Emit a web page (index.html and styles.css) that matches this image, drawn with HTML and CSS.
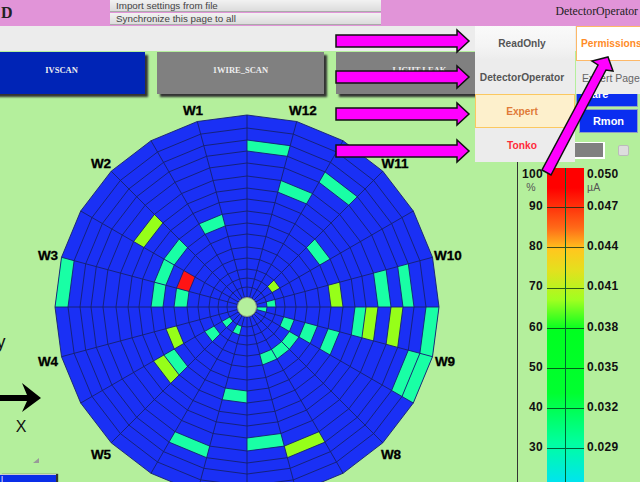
FILE: index.html
```html
<!DOCTYPE html>
<html lang="en">
<head>
    <meta charset="UTF-8">
    <meta name="viewport" content="width=device-width, initial-scale=1.0">
    <title>DetectorOperator</title>
    <link rel="stylesheet" href="styles.css">
</head>
<body>

    <!-- Top bar -->
    <div class="header">
        <div class="brand">D</div>
        <div class="file-menu">
            <button class="file-btn">Import settings from file</button>
            <button class="file-btn">Synchronize this page to all</button>
        </div>
        <div class="user">DetectorOperator</div>
    </div>
    <div class="toolbar"></div>

    <div class="main">
        <!-- Scan buttons and sector wheel -->
        <div class="left-col">
            <div class="scans">
                <button class="scan-btn scan-active">IVSCAN</button>
                <button class="scan-btn">1WIRE_SCAN</button>
                <button class="scan-btn">LIGHT LEAK</button>
            </div>
            <svg id="wheel" class="wheel" viewBox="0 95 517 387">
                <g id="cells"></g>
                <g id="grid" class="grid"></g>
                <circle class="hub" cx="247" cy="307" r="9.5"></circle>
                <text class="sector" x="193" y="115">W1</text>
                <text class="sector" x="303" y="115">W12</text>
                <text class="sector" x="395" y="168">W11</text>
                <text class="sector" x="448" y="260">W10</text>
                <text class="sector" x="445" y="366">W9</text>
                <text class="sector" x="391" y="459">W8</text>
                <text class="sector" x="101" y="459">W5</text>
                <text class="sector" x="48" y="366">W4</text>
                <text class="sector" x="48" y="260">W3</text>
                <text class="sector" x="101" y="168">W2</text>
                <text class="axis axis-y" x="1" y="348">y</text>
                <text class="axis" x="21" y="432">X</text>
                <polygon class="axis-arrow" points="0,395 27,395 22,383 41,398 22,412 27,401 0,401"></polygon>
                <polygon class="resize-mark" points="39,458 39,463 33,463"></polygon>
            </svg>
            <button class="corner-btn">l</button>
        </div>

        <!-- Side panel with colour scale -->
        <div class="side">
            <div class="side-buttons">
                <button class="side-btn side-btn-wide">are</button>
                <button class="side-btn">Rmon</button>
            </div>
            <div class="swatches">
                <div class="swatch"></div>
                <div class="check"></div>
            </div>
            <div class="scale">
                <div class="scale-labels scale-left">
                    <div class="scale-head">100<span class="unit">%</span></div>
                    <div class="scale-label">90</div>
                    <div class="scale-label">80</div>
                    <div class="scale-label">70</div>
                    <div class="scale-label">60</div>
                    <div class="scale-label">50</div>
                    <div class="scale-label">40</div>
                    <div class="scale-label">30</div>
                </div>
                <div class="bar">
                    <div class="tick"></div>
                    <div class="tick"></div>
                    <div class="tick"></div>
                    <div class="tick"></div>
                    <div class="tick"></div>
                    <div class="tick"></div>
                    <div class="tick"></div>
                </div>
                <div class="scale-labels">
                    <div class="scale-head">0.050<span class="unit">µA</span></div>
                    <div class="scale-label">0.047</div>
                    <div class="scale-label">0.044</div>
                    <div class="scale-label">0.041</div>
                    <div class="scale-label">0.038</div>
                    <div class="scale-label">0.035</div>
                    <div class="scale-label">0.032</div>
                    <div class="scale-label">0.029</div>
                </div>
            </div>
        </div>
    </div>

    <!-- Permission menus that open over the page -->
    <div class="menu menu-roles">
        <div class="menu-item item-readonly">ReadOnly</div>
        <div class="menu-item">DetectorOperator</div>
        <div class="menu-item item-expert">Expert</div>
        <div class="menu-item item-tonko">Tonko</div>
    </div>
    <div class="menu menu-tabs">
        <div class="menu-item item-permissions">Permissions</div>
        <div class="menu-item item-page">Expert Page</div>
    </div>

    <!-- Magenta callout arrows -->
    <svg class="callouts" viewBox="0 0 640 482">
        <polygon points="336,35 457,35 457,30 469,41 457,52 457,47 336,47"></polygon>
        <polygon points="336,71 457,71 457,66 469,77 457,88 457,83 336,83"></polygon>
        <polygon points="336,108 457,108 457,103 469,114 457,125 457,120 336,120"></polygon>
        <polygon points="336,145 457,145 457,140 469,151 457,162 457,157 336,157"></polygon>
        <polygon points="542,170 551,175 606,70 613,71 608,57 592,61 598,65"></polygon>
    </svg>

    <script src="wheel.js"></script>
</body>
</html>
```

FILE: styles.css
```css
/* Basic reset */
* {
    margin: 0;
    padding: 0;
    box-sizing: border-box;
}

body {
    font-family: "Liberation Sans", Arial, sans-serif;
    width: 640px;
    height: 482px;
    overflow: hidden;
    position: relative;
    background: #b4ef9c;
}

button {
    font-family: inherit;
    border: none;
}

/* Top bar */
.header {
    height: 26px;
    display: flex;
    background: #e194d8;
}

.brand {
    width: 110px;
    padding-left: 1px;
    font-family: "Liberation Serif", serif;
    font-weight: bold;
    font-size: 16px;
    line-height: 25px;
    color: #222;
}

.file-menu {
    width: 271px;
    display: flex;
    flex-direction: column;
    gap: 1px;
}

.file-btn {
    height: 12px;
    padding-left: 6px;
    text-align: left;
    font-size: 9.8px;
    line-height: 12px;
    color: #444;
    background: linear-gradient(to bottom, #f2f2f2, #dcdcdc);
    border-bottom: 1px solid #aaa;
}

.user {
    margin-left: auto;
    padding-right: 2px;
    font-family: "Liberation Serif", serif;
    font-size: 11.8px;
    line-height: 23px;
    color: #222;
}

.toolbar {
    height: 25px;
    background: #ececec;
}

.main {
    height: 431px;
    display: flex;
}

/* Scan buttons and wheel */
.left-col {
    width: 517px;
    flex: none;
    position: relative;
}

.scans {
    height: 44px;
    padding-top: 1px;
    margin-left: -22px;
    display: flex;
    gap: 12px;
}

.scan-btn {
    width: 167px;
    height: 42px;
    padding-bottom: 6px;
    background: #808080;
    color: #eee;
    font-family: "Liberation Serif", serif;
    font-weight: bold;
    font-size: 8.5px;
    box-shadow: 3px 3px 2px #333;
}

.scan-active {
    background: #0024b6;
}

.wheel {
    display: block;
    width: 517px;
    height: 387px;
}

.grid {
    fill: none;
    stroke: #15206e;
    stroke-width: 0.9;
}

.hub {
    fill: #b4ef9c;
    stroke: #8a9a80;
    stroke-width: 1;
}

.sector {
    font-weight: bold;
    font-size: 13.5px;
    text-anchor: middle;
    fill: #000;
    stroke: #000;
    stroke-width: 0.3;
}

.axis {
    font-size: 16px;
    text-anchor: middle;
    fill: #111;
}

.axis-y {
    font-size: 18px;
}

.resize-mark {
    fill: #999;
}

.corner-btn {
    position: absolute;
    left: 0;
    bottom: -3px;
    width: 56px;
    height: 11px;
    padding-left: 1px;
    text-align: left;
    font-size: 9px;
    color: #fff;
    background: #0a2ee8;
    border-top: 1px solid #ccc;
    box-shadow: 2px 0 1px #333;
}

/* Side panel */
.side {
    flex: 1;
    border-left: 1px solid #333;
    display: flex;
    flex-direction: column;
    padding-top: 30px;
}

.side-buttons {
    height: 52px;
    display: flex;
    flex-direction: column;
    align-items: flex-end;
    gap: 2px;
    padding-right: 2px;
}

.side-btn {
    width: 59px;
    height: 24px;
    flex: none;
    background: #0a2ef0;
    color: #fff;
    font-size: 11px;
    font-weight: bold;
    border: 1px solid #8fa0c0;
}

.side-btn-wide {
    width: 62px;
    height: 26px;
    padding-right: 14px;
}

.swatches {
    height: 35px;
    padding: 9px 11px 0 47px;
    display: flex;
    justify-content: space-between;
}

.swatch {
    width: 40px;
    height: 17px;
    background: #808080;
    border: 1px solid #fff;
    border-width: 1px 2px 2px 1px;
}

.check {
    width: 11px;
    height: 11px;
    margin-top: 3px;
    background: #ddd;
    border: 1px solid #bbb;
    border-radius: 2px;
}

.scale {
    flex: 1;
    display: flex;
}

.scale-labels {
    display: flex;
    flex-direction: column;
    font-size: 12px;
    letter-spacing: 0.3px;
    font-weight: bold;
    color: #111;
    line-height: 12px;
    padding-left: 3px;
}

.scale-left {
    width: 26px;
    padding-left: 0;
    padding-right: 1px;
    margin-right: 3px;
    text-align: right;
}

.scale-head {
    height: 32px;
    flex: none;
}

.scale-label {
    height: 40.2px;
    flex: none;
}

.unit {
    display: block;
    margin-top: 1px;
    font-size: 10.5px;
    font-weight: normal;
    color: #555;
}

.scale-left .unit {
    padding-right: 7px;
}

.bar {
    width: 37px;
    height: 314px;
    position: relative;
    background: linear-gradient(to bottom,
        #ff0000 0, #ff0000 20px, #ff6a18 60px, #ffc81e 82px, #e4e01e 102px,
        #a0ff20 132px, #00ff20 162px, #00ff30 225px, #00ffa0 275px, #00e4ee 314px);
}

/* center line of the bar */
.bar::after {
    content: "";
    position: absolute;
    top: 0;
    bottom: 0;
    left: 18px;
    width: 1px;
    background: #063;
}

.tick {
    height: 40.2px;
    border-bottom: 1px solid rgba(0, 40, 20, 0.75);
}

/* Menus over the page */
.menu {
    position: absolute;
    top: 26px;
    display: flex;
    flex-direction: column;
    font-size: 10.2px;
    font-weight: bold;
    color: #555;
}

.menu-roles {
    left: 475px;
    width: 100px;
}

.menu-roles .menu-item {
    padding-right: 6px;
}

.menu-tabs {
    left: 576px;
    width: 64px;
    white-space: nowrap;
    overflow: hidden;
}

.menu-item {
    height: 34px;
    display: flex;
    align-items: center;
    justify-content: center;
    background: #ececec;
}

.item-readonly {
    background: linear-gradient(to bottom, #fafafa, #f4f4f4 60%, #ececec);
}

.item-expert {
    background: #fdf0cc;
    color: #e07b39;
    border: 1px solid #fbc860;
}

.item-tonko {
    color: #ff2a3a;
}

.item-permissions {
    height: 35px;
    justify-content: flex-start;
    padding-left: 4px;
    background: #fff;
    color: #ff8c28;
    border: 1px solid #fdb868;
    border-right: none;
}

.item-page {
    height: 33px;
    justify-content: flex-start;
    padding-left: 6px;
    font-size: 10.5px;
    font-weight: normal;
    color: #666;
}

.callouts {
    position: absolute;
    top: 0;
    left: 0;
    width: 640px;
    height: 482px;
    fill: #ff00ff;
    stroke: #111;
    stroke-width: 1.5;
}
```

FILE: wheel.js
```js
'use strict';

const SVG_NS = 'http://www.w3.org/2000/svg';
const CX = 247;
const CY = 307;
const SECTORS = 24;

// Ring edges, outside to inside
const RADII = [192, 179, 167, 156, 144, 131, 119, 108, 96, 84, 73, 60, 49, 38, 29, 20, 10];

const COLD = '#19ffa5';
const WARM = '#96ff19';
const HOT = '#ff1414';

// Lit channels: [ring index, sector counted counter-clockwise from +x, colour]
const CELLS = [
    [2, 5, COLD], [5, 4, COLD], [3, 3, COLD], [8, 2, COLD], [13, 2, WARM],
    [14, 0, COLD], [8, 0, WARM], [4, 0, COLD], [2, 0, COLD],
    [6, 23, COLD], [5, 23, WARM], [3, 23, WARM], [0, 23, COLD], [15, 23, COLD],
    [0, 22, COLD], [1, 22, COLD], [8, 22, COLD], [10, 22, COLD], [12, 22, COLD],
    [11, 21, COLD], [11, 20, COLD], [11, 19, COLD],
    [14, 16, COLD], [14, 14, COLD], [12, 14, COLD],
    [9, 13, WARM], [8, 14, COLD], [7, 14, WARM],
    [10, 11, COLD], [10, 10, HOT], [8, 11, COLD], [8, 10, COLD], [8, 9, COLD],
    [5, 9, WARM], [8, 7, COLD], [0, 11, COLD], [8, 17, COLD],
    [3, 16, COLD], [4, 18, COLD], [3, 19, WARM]
];

// Point on the wheel for a radius and a sector edge
function point(r, s) {
    const a = s * Math.PI / 12;
    return (CX + r * Math.cos(a)).toFixed(1) + ',' + (CY - r * Math.sin(a)).toFixed(1);
}

function addShape(parent, name, attrs) {
    const el = document.createElementNS(SVG_NS, name);
    Object.keys(attrs).forEach(function (key) {
        el.setAttribute(key, attrs[key]);
    });
    parent.appendChild(el);
}

function drawBase(grid) {
    const outer = [];
    for (let s = 0; s < SECTORS; s++) {
        outer.push(point(RADII[0], s));
    }
    addShape(document.getElementById('cells'), 'polygon', { points: outer.join(' '), fill: '#1a30f5' });

    RADII.forEach(function (r) {
        const pts = [];
        for (let s = 0; s < SECTORS; s++) {
            pts.push(point(r, s));
        }
        addShape(grid, 'polygon', { points: pts.join(' ') });
    });

    for (let s = 0; s < SECTORS; s++) {
        addShape(grid, 'polyline', { points: point(RADII[16], s) + ' ' + point(RADII[0], s) });
    }
}

function drawCells() {
    const parent = document.getElementById('cells');
    CELLS.forEach(function (cell) {
        const outerR = RADII[cell[0]];
        const innerR = RADII[cell[0] + 1];
        const s = cell[1];
        const pts = [point(outerR, s), point(outerR, s + 1), point(innerR, s + 1), point(innerR, s)];
        addShape(parent, 'polygon', { points: pts.join(' '), fill: cell[2] });
    });
}

drawBase(document.getElementById('grid'));
drawCells();
```
